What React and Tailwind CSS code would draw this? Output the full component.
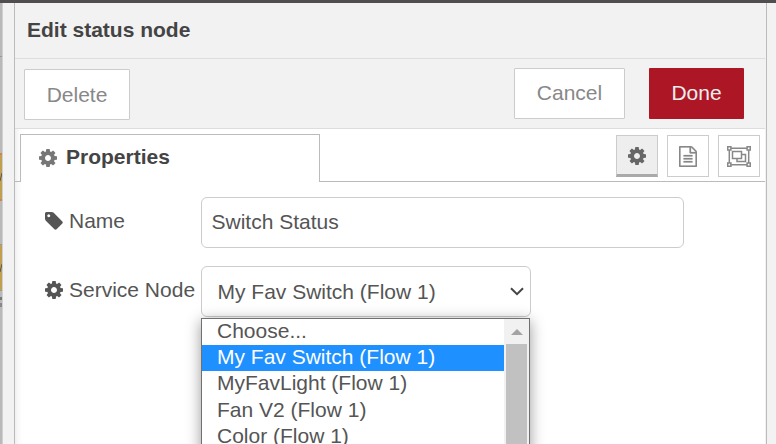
import React from "react";

function Gear({ className }) {
  return (
    <svg viewBox="0 128 1536 1536" fill="currentColor" className={className}>
      <path d="M1024 896q0-106-75-181t-181-75-181 75-75 181 75 181 181 75 181-75 75-181zm512-109v222q0 12-8 23t-20 13l-185 28q-19 54-39 91 35 50 107 138 10 12 10 25t-9 23q-27 37-99 108t-94 71q-12 0-26-9l-138-108q-44 23-91 38-16 136-29 186-7 28-36 28h-222q-14 0-24.5-8.5t-11.5-21.5l-28-184q-49-16-90-37l-141 107q-10 9-25 9-14 0-25-11-126-114-165-168-7-10-7-23 0-12 8-23 15-21 51-66.5t54-70.5q-27-50-41-99l-183-27q-13-2-21-12.5t-8-23.5v-222q0-12 8-23t19-13l186-28q14-46 39-92-40-57-107-138-10-12-10-24 0-10 9-23 26-36 98.5-107.5t94.5-71.5q13 0 26 10l138 107q44-23 91-38 16-136 29-186 7-28 36-28h222q14 0 24.5 8.5t11.5 21.5l28 184q49 16 90 37l142-107q9-9 24-9 13 0 25 10 129 119 165 170 7 8 7 22 0 12-8 23-15 21-51 66.5t-54 70.5q26 50 41 98l183 28q13 2 21 12.5t8 23.5z" />
    </svg>
  );
}

function Tag({ className }) {
  return (
    <svg viewBox="0 128 1536 1536" fill="currentColor" className={className}>
      <path d="M448 448q0-53-37.5-90.5t-90.5-37.5-90.5 37.5-37.5 90.5 37.5 90.5 90.5 37.5 90.5-37.5 37.5-90.5zm1067 576q0 53-37 90l-491 492q-39 37-91 37-53 0-90-37l-715-716q-38-37-64.5-101t-26.5-117v-416q0-52 38-90t90-38h416q53 0 117 26.5t102 64.5l715 714q37 39 37 91z" />
    </svg>
  );
}

function FileText({ className }) {
  return (
    <svg viewBox="0 0 1536 1792" fill="currentColor" stroke="currentColor" strokeWidth="20" className={className}>
      <path d="M1468 380q28 28 48 76t20 88v1152q0 40-28 68t-68 28h-1344q-40 0-68-28t-28-68v-1600q0-40 28-68t68-28h896q40 0 88 20t76 48zm-444-244v376h376q-10-29-22-41l-313-313q-12-12-41-22zm384 1528v-1024h-416q-40 0-68-28t-28-68v-416h-768v1536h1280zm-1024-864q0-14 9-23t23-9h704q14 0 23 9t9 23v64q0 14-9 23t-23 9h-704q-14 0-23-9t-9-23v-64zm736 224q14 0 23 9t9 23v64q0 14-9 23t-23 9h-704q-14 0-23-9t-9-23v-64q0-14 9-23t23-9h704zm0 256q14 0 23 9t9 23v64q0 14-9 23t-23 9h-704q-14 0-23-9t-9-23v-64q0-14 9-23t23-9h704z" />
    </svg>
  );
}

function ObjectGroup({ className }) {
  return (
    <svg viewBox="0 0 24 21" fill="none" stroke="currentColor" strokeWidth="1.5" className={className}>
      <path d="M4 2.300H20M4 18.700H20M2.300 4V17M21.700 4V17" />
      <path d="M.7 .7h3.200v3.200h-3.200zM20.100 .7h3.200v3.200h-3.200zM.7 17.100h3.200v3.200h-3.200zM20.100 17.100h3.200v3.200h-3.200z" />
      <path d="M5.500 5.500h9v7h-9zM14.500 8.500h4v7h-8.500v-3" />
    </svg>
  );
}

const options = ["Choose...", "My Fav Switch (Flow 1)", "MyFavLight (Flow 1)", "Fan V2 (Flow 1)", "Color (Flow 1)"];

function CanvasEdge() {
  return (
    <div className="flex h-full w-[3px] shrink-0 flex-col overflow-hidden border-r border-[#d0d0d0] bg-[#b9b9b9]">
      <div className="mt-[53px] h-px bg-[#999]" />
      <div className="mt-[96px] flex h-[48px] items-center justify-end border-y-2 border-[#d8804c] bg-[#c0a050]">
        <svg viewBox="0 0 2 8" className="h-2 w-[2px]"><path d="M0 8L2 0" stroke="#555" /></svg>
      </div>
      <div className="mt-[43px] flex h-[47px] items-center justify-end border-y border-[#999] bg-[#c0a050]">
        <svg viewBox="0 0 2 8" className="h-2 w-[2px]"><path d="M0 8L2 0" stroke="#555" /></svg>
      </div>
      <div className="mt-[6px] h-[3px] bg-[#777]" />
      <div className="mt-[3px] h-[4px] bg-[#888]" />
    </div>
  );
}

export default function App() {
  return (
    <div className="flex h-[444px] w-[776px] flex-col overflow-hidden bg-[#f2f2f2] font-['Liberation_Sans',Arial,sans-serif] text-[21px] text-[#555]">
      <div className="h-[3px] shrink-0 bg-[#504e4e]" />
      <div className="flex h-[441px]">
        <CanvasEdge />
        <div className="ml-[11px] flex w-[753px] flex-col border-x border-[#bbb] pr-px">
          <header className="flex h-[56px] shrink-0 items-center border-b border-[#ddd] pb-[2px] pl-3 font-bold text-[#444]">
            <h1 className="whitespace-nowrap">Edit status node</h1>
          </header>
          <div className="flex h-[70px] shrink-0 items-start border-b border-[#ddd] pt-[9px] pr-[21px] pl-[9px] text-[#888]">
            <button className="mt-px h-[51px] w-[106px] rounded-[1px] border border-[#ccc] bg-white">Delete</button>
            <button className="ml-auto h-[51px] w-[111px] rounded-[1px] border border-[#ccc] bg-white pb-[2px]">Cancel</button>
            <button className="ml-6 h-[51px] w-[95px] rounded-[1px] bg-[#ad1625] pb-[2px] text-[#eee]">Done</button>
          </div>
          <div className="flex grow flex-col bg-white shadow-[inset_8px_0_8px_-8px_rgba(0,0,0,0.12)]">
            <div className="flex h-[53px] shrink-0">
              <div className="w-[5px] border-b border-[#bbb]" />
              <div className="mt-[5px] flex w-[300px] items-center border border-b-0 border-[#bbb] pb-[2px] pl-[18px] font-bold text-[#444]">
                <Gear className="mr-[9px] size-[18px] text-[#777]" />
                <span className="pb-[2px]">Properties</span>
              </div>
              <div className="flex grow justify-end gap-[9px] border-b border-[#bbb] pt-[6px] pr-[5px] text-[#888]">
                <button className="flex h-[42px] w-[42px] items-center justify-center border border-b-[3px] border-[#ccc] border-b-[#aaa] bg-[#eee] pt-[2px] text-[#666]">
                  <Gear className="size-[18px]" />
                </button>
                <button className="flex size-[42px] items-center justify-center border border-[#ccc] bg-white">
                  <FileText className="h-[21px] w-[18px]" />
                </button>
                <button className="flex size-[42px] items-center justify-center border border-[#ccc] bg-white">
                  <ObjectGroup className="h-[21px] w-6" />
                </button>
              </div>
            </div>
            <div className="mt-[15px] flex h-[51px] shrink-0 pl-[30px]">
              <label className="flex w-[156px] items-center pb-[3px]">
                <Tag className="mr-[6px] size-[18px]" />
                Name
              </label>
              <div className="flex w-[483px] items-center rounded-[6px] border border-[#ccc] bg-white pb-[2px] pl-[9.5px]">Switch Status</div>
            </div>
            <div className="mt-[18px] flex h-[51px] shrink-0 pl-[30px]">
              <label className="flex w-[156px] items-center pb-[3px] whitespace-nowrap">
                <Gear className="mr-[6px] size-[18px] shrink-0" />
                Service Node
              </label>
              <div className="relative w-[330px]">
                <div className="flex h-[51px] items-center justify-between rounded-[6px] border border-[#ccc] bg-white pr-[6px] pl-[15.5px]">
                  <span className="pt-px">My Fav Switch (Flow 1)</span>
                  <svg viewBox="0 0 14 9" className="h-[9px] w-[14px]" fill="none" stroke="#444" strokeWidth="2">
                    <path d="M1 1.200L7 7.200L13 1.200" />
                  </svg>
                </div>
                <div className="absolute top-[52px] left-0 flex h-[180px] w-[329px] border border-[#707070] bg-white shadow-[0_3px_14px_rgba(0,0,0,0.4)]">
                  <ul className="w-[302px]">
                    {options.map((o, i) => (
                      <li key={o} className={i === 1 ? "h-[26px] bg-[#1e90ff] pl-[15px] leading-[23px] text-white" : "h-[26.3px] pl-[15px] leading-[23px]"}>
                        {o}
                      </li>
                    ))}
                  </ul>
                  <div className="flex w-[25px] flex-col items-center bg-[#f1f1f1]">
                    <svg viewBox="0 0 12 6" className="mt-[10px] mb-[9px] h-[6px] w-3" fill="#a3a3a3">
                      <path d="M0 6L6 0L12 6Z" />
                    </svg>
                    <div className="w-[21px] grow bg-[#c1c1c1]" />
                  </div>
                </div>
              </div>
            </div>
          </div>
        </div>
      </div>
    </div>
  );
}
